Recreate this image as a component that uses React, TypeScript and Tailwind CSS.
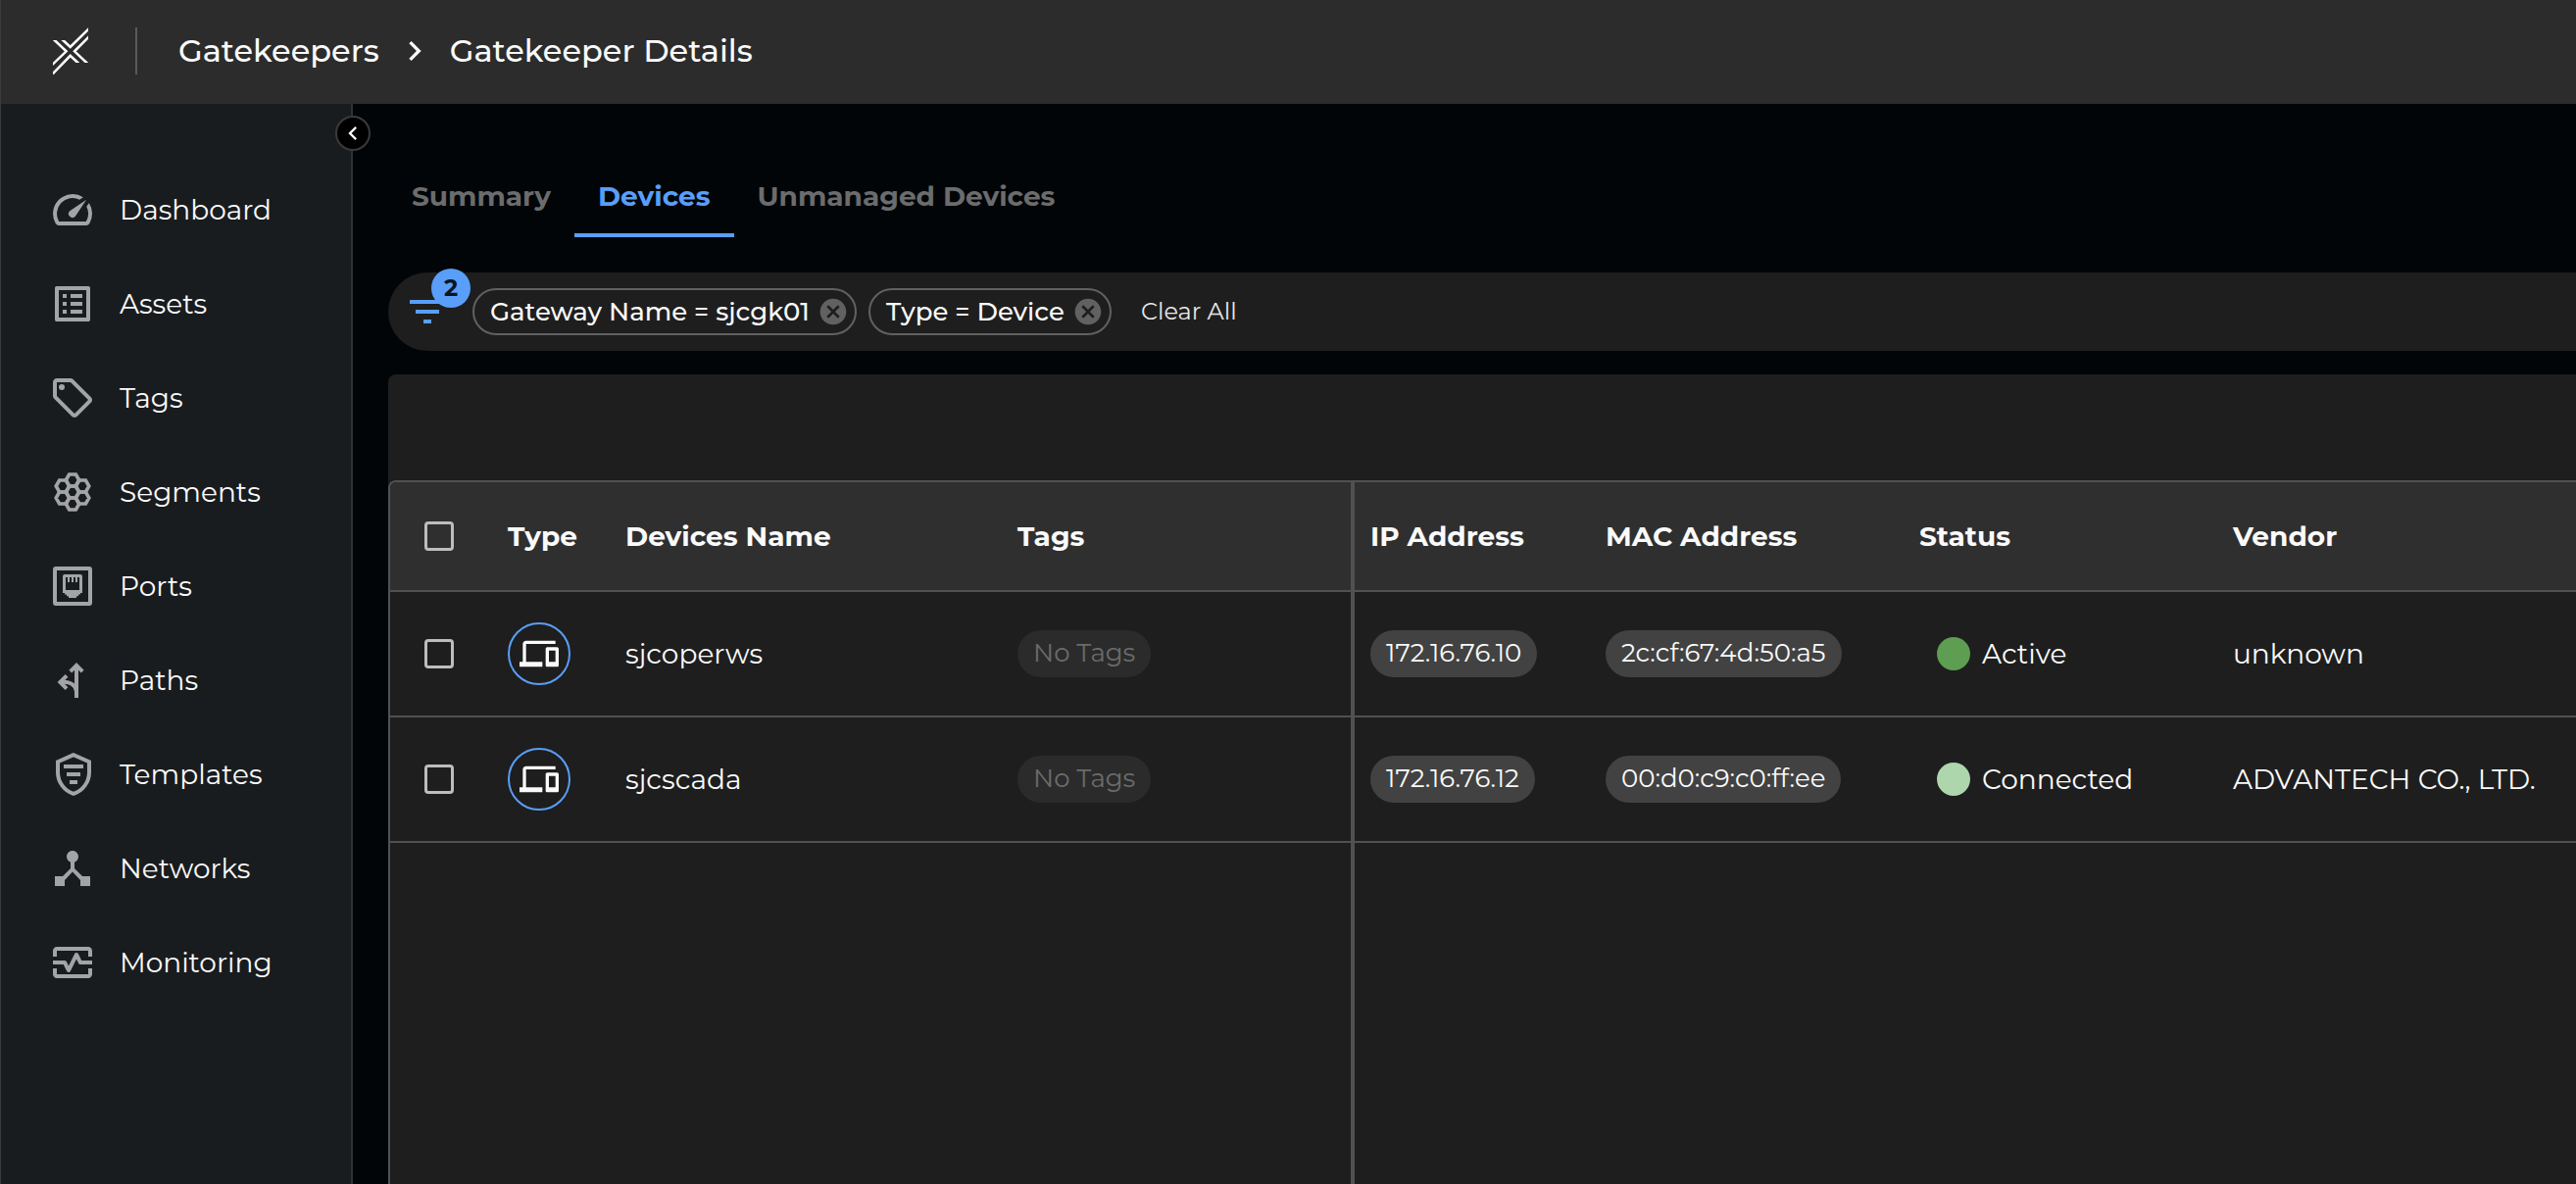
import React from "react";
import {
  MdCancel,
  MdChevronLeft,
  MdChevronRight,
  MdDeviceHub,
  MdDevices,
  MdFilterList,
  MdOutlineListAlt,
  MdOutlineLocalOffer,
  MdOutlineMonitorHeart,
  MdSpeed,
} from "react-icons/md";

const iconClass = "h-12 w-12 shrink-0";

function LogoMark() {
  return (
    <svg className="h-12 w-9" viewBox="0 0 36 48" fill="none" aria-hidden="true">
      <clipPath id="logo-clip">
        <polygon points="0,13 18,13 18,0 36,0 36,36 18,36 18,48 0,48" />
      </clipPath>
      <g clipPath="url(#logo-clip)" stroke="#fff" strokeWidth="2.5">
        <path d="M0 11.5L13.600 24.300L-2 39.300" />
        <path d="M9.200 12L17.700 19.900L38 0" />
        <path d="M38 8.300L22 24.300L36 37.500" />
        <path d="M-2 49.200L17.700 28.800L27 37.500" />
      </g>
    </svg>
  );
}

function SegmentsIcon() {
  const centers = [
    [12, 12],
    [12, 6],
    [12, 18],
    [7, 9],
    [7, 15],
    [17, 9],
    [17, 15],
  ];
  return (
    <svg className={iconClass} viewBox="0 0 24 24" fill="none" stroke="currentColor" strokeWidth="1.8" aria-hidden="true">
      {centers.map(([x, y]) => (
        <path key={`${x}-${y}`} d={`M${x - 3.4} ${y}l1.700-3h3.400l1.700 3l-1.700 3h-3.400z`} />
      ))}
    </svg>
  );
}

function PortsIcon() {
  return (
    <svg className={iconClass} viewBox="0 0 24 24" fill="none" aria-hidden="true">
      <rect x="3" y="3" width="18" height="18" rx="0.500" stroke="currentColor" strokeWidth="2" />
      <path
        fill="currentColor"
        fillRule="evenodd"
        d="M8 6h8a1 1 0 0 1 1 1v8.500h-1v.8h-1v.8h-1V18h-4v-.900h-1v-.8H8v-.8H7V7a1 1 0 0 1 1-1zM8.500 7.500V14h7V7.500h-1V10h-1V7.500h-1V10h-1V7.500h-1V10h-1V7.500z"
      />
    </svg>
  );
}

function PathsIcon() {
  return (
    <svg className={iconClass} viewBox="0 0 24 24" fill="none" stroke="currentColor" strokeWidth="2" aria-hidden="true">
      <path d="M14 21V5" />
      <path d="M10.900 7.600L14 4.400L17.100 7.600" />
      <path d="M6 13C9.500 12.600 13.200 13.500 14 17.500" />
      <path d="M9 9.700L5.700 13L9 16.300" />
    </svg>
  );
}

function TemplatesIcon() {
  return (
    <svg className={iconClass} viewBox="0 0 24 24" fill="none" stroke="currentColor" strokeWidth="2" aria-hidden="true">
      <path d="M12.500 2.100L4.500 5.600V11C4.500 16 7.900 20.600 12.500 21.900C17.100 20.600 20.500 16 20.500 11V5.600z" />
      <path d="M7.500 8H17.500M9 12H16M10.500 16H14.500" />
    </svg>
  );
}

const navItems = [
  { label: "Dashboard", icon: <MdSpeed className={iconClass} /> },
  { label: "Assets", icon: <MdOutlineListAlt className={iconClass} /> },
  { label: "Tags", icon: <MdOutlineLocalOffer className={iconClass} /> },
  { label: "Segments", icon: <SegmentsIcon /> },
  { label: "Ports", icon: <PortsIcon /> },
  { label: "Paths", icon: <PathsIcon /> },
  { label: "Templates", icon: <TemplatesIcon /> },
  { label: "Networks", icon: <MdDeviceHub className={iconClass} /> },
  { label: "Monitoring", icon: <MdOutlineMonitorHeart className={iconClass} /> },
];

const tabs = [
  { label: "Summary", active: false },
  { label: "Devices", active: true },
  { label: "Unmanaged Devices", active: false },
];

const filters = ["Gateway Name = sjcgk01", "Type = Device"];

const devices = [
  {
    name: "sjcoperws",
    ip: "172.16.76.10",
    mac: "2c:cf:67:4d:50:a5",
    status: "Active",
    dot: "bg-[#5d9e52]",
    vendor: "unknown",
  },
  {
    name: "sjcscada",
    ip: "172.16.76.12",
    mac: "00:d0:c9:c0:ff:ee",
    status: "Connected",
    dot: "bg-[#aed6ac]",
    vendor: "ADVANTECH CO., LTD.",
  },
];

function Checkbox({ label }: { label: string }) {
  return (
    <input
      type="checkbox"
      aria-label={label}
      className="block h-[30px] w-[30px] appearance-none rounded-sm border-3 border-[#bdbdbd] checked:bg-[#599ef8]"
    />
  );
}

function Header() {
  return (
    <header className="flex h-[106px] shrink-0 items-center bg-[#2c2c2c] pb-0.5 pl-[53px]">
      <a href="#home" aria-label="Home">
        <LogoMark />
      </a>
      <div className="ml-12 h-12 w-0.5 bg-[#5a5a5a]" />
      <nav aria-label="Breadcrumb" className="ml-[42px] flex items-center gap-4 text-[32px] leading-10 font-medium">
        <a href="#gatekeepers">Gatekeepers</a>
        <MdChevronRight className="h-10 w-10" />
        <h1>Gatekeeper Details</h1>
      </nav>
    </header>
  );
}

function Sidebar() {
  return (
    <aside className="relative w-[359px] shrink-0 border-r-2 border-[#2f3234] bg-[#191c1f] pt-[60px]">
      <button
        type="button"
        aria-label="Collapse sidebar"
        className="absolute top-3 -right-5 z-10 flex h-9 w-9 items-center justify-center rounded-full border-2 border-[#3a3a3a] bg-black"
      >
        <MdChevronLeft className="h-7 w-7 shrink-0" />
      </button>
      <nav aria-label="Main">
        <ul>
          {navItems.map((item) => (
            <li key={item.label}>
              <a href={`#${item.label.toLowerCase()}`} className="flex h-24 items-center gap-6 pl-[49px] text-[28px]">
                <span className="text-[#a3a4a6]">{item.icon}</span>
                {item.label}
              </a>
            </li>
          ))}
        </ul>
      </nav>
    </aside>
  );
}

function Tabs() {
  return (
    <div role="tablist" className="mt-[52px] flex">
      {tabs.map((tab) => (
        <button
          key={tab.label}
          type="button"
          role="tab"
          aria-selected={tab.active}
          className={
            tab.active
              ? "h-[84px] border-b-4 border-[#599ef8] px-6 pt-1 text-[28px] font-bold text-[#599ef8]"
              : "h-[84px] border-b-4 border-transparent px-6 pt-1 text-[28px] font-bold text-[#6b6c6d]"
          }
        >
          {tab.label}
        </button>
      ))}
    </div>
  );
}

function FilterBar() {
  return (
    <div className="mt-9 flex h-20 items-center rounded-l-full bg-[#1e1e1e] pl-4 text-[26px]">
      <button type="button" aria-label="Filters, 2 applied" className="relative text-[#599ef8]">
        <MdFilterList className="h-12 w-12" />
        <span className="absolute -top-5 left-7 flex h-10 w-10 items-center justify-center rounded-full bg-[#599ef8] text-2xl font-bold text-[#0b1420]">
          2
        </span>
      </button>
      <ul className="ml-[22px] flex gap-3">
        {filters.map((filter) => (
          <li
            key={filter}
            className="flex h-12 items-center gap-2 rounded-full border-2 border-[#616161] pr-1.5 pl-4 font-medium"
          >
            {filter}
            <button type="button" aria-label={`Remove ${filter}`} className="text-[#616161]">
              <MdCancel className="h-8 w-8" />
            </button>
          </li>
        ))}
      </ul>
      <button type="button" className="ml-[30px] text-2xl text-[#e6e6e6]">
        Clear All
      </button>
    </div>
  );
}

const headCell = "border-b-2 border-[#515151] bg-[#2f2f2f] pl-4 text-left font-bold";
const bodyCell = "border-b-2 border-[#515151] pl-4";

function DeviceTable() {
  return (
    <section className="mt-6 flex flex-1 flex-col rounded-tl-lg bg-[#1e1e1e] pt-[108px]">
      <div className="flex flex-1 flex-col overflow-hidden rounded-tl-lg border-t-2 border-l-2 border-[#515151]">
        <table className="w-full flex-1 table-fixed border-separate border-spacing-0 text-[28px]">
          <colgroup>
            <col className="w-[104px]" />
            <col className="w-[120px]" />
            <col className="w-[400px]" />
            <col className="w-[360px]" />
            <col className="w-[240px]" />
            <col className="w-[320px]" />
            <col className="w-[320px]" />
            <col />
          </colgroup>
          <thead>
            <tr className="h-28">
              <th className="border-b-2 border-[#515151] bg-[#2f2f2f] pl-[35px]">
                <Checkbox label="Select all devices" />
              </th>
              <th className={headCell}>Type</th>
              <th className={headCell}>Devices Name</th>
              <th className={`${headCell} border-r-4`}>Tags</th>
              <th className={headCell}>IP Address</th>
              <th className={headCell}>MAC Address</th>
              <th className={headCell}>Status</th>
              <th className={headCell}>Vendor</th>
            </tr>
          </thead>
          <tbody>
            {devices.map((device) => (
              <tr key={device.name} className="h-32">
                <td className="border-b-2 border-[#515151] pl-[35px]">
                  <Checkbox label={`Select ${device.name}`} />
                </td>
                <td className={bodyCell}>
                  <span className="flex h-16 w-16 items-center justify-center rounded-full border-2 border-[#599ef8]">
                    <MdDevices className="h-10 w-10" />
                  </span>
                </td>
                <td className={bodyCell}>{device.name}</td>
                <td className={`${bodyCell} border-r-4`}>
                  <span className="flex h-12 w-fit items-center rounded-full bg-[#2b2b2b] px-4 pb-0.5 text-[26px] text-[#6b6b6b]">
                    No Tags
                  </span>
                </td>
                <td className={bodyCell}>
                  <span className="flex h-12 w-fit items-center rounded-full bg-[#424242] px-4 pb-0.5 text-[26px]">
                    {device.ip}
                  </span>
                </td>
                <td className={bodyCell}>
                  <span className="flex h-12 w-fit items-center rounded-full bg-[#424242] px-4 pb-0.5 text-[26px]">
                    {device.mac}
                  </span>
                </td>
                <td className={bodyCell}>
                  <span className="flex items-center gap-3 pl-[18px]">
                    <span className={`h-[34px] w-[34px] rounded-full ${device.dot}`} />
                    {device.status}
                  </span>
                </td>
                <td className={bodyCell}>{device.vendor}</td>
              </tr>
            ))}
            <tr>
              <td colSpan={4} className="border-r-4 border-[#515151]" />
              <td colSpan={4} />
            </tr>
          </tbody>
        </table>
      </div>
    </section>
  );
}

export default function App() {
  return (
    <div className="flex min-h-screen flex-col border-l border-[#3a3c3e] bg-[#010508] font-[Montserrat,Inter,sans-serif] text-[#fafafa]">
      <Header />
      <div className="flex flex-1">
        <Sidebar />
        <main className="flex min-w-0 flex-1 flex-col pl-9">
          <Tabs />
          <FilterBar />
          <DeviceTable />
        </main>
      </div>
    </div>
  );
}
